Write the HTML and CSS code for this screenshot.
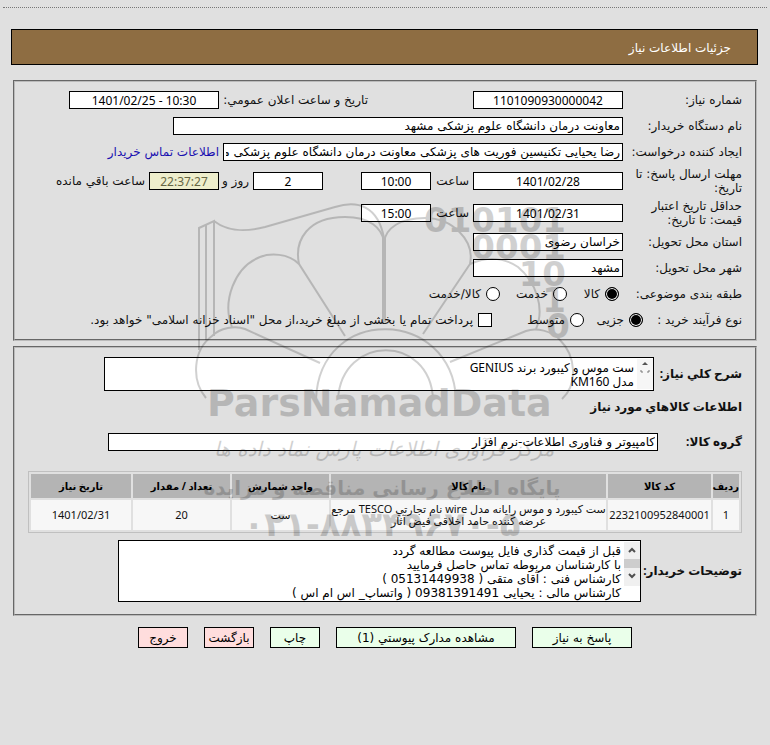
FILE: index.html
```html
<!DOCTYPE html>
<html lang="fa" dir="rtl">
<head>
    <meta charset="UTF-8">
    <meta name="viewport" content="width=device-width, initial-scale=1.0">
    <title>جزئیات اطلاعات نیاز</title>
    <link rel="stylesheet" href="styles.css">
</head>
<body>

    <header class="page-title">جزئیات اطلاعات نیاز</header>

    <main>
        <!-- Request details -->
        <section class="panel">
            <div class="row">
                <label class="caption" for="need-no">شماره نیاز:</label>
                <input type="text" id="need-no" class="w-date center" value="1101090930000042" readonly>
                <label class="announce" for="announce">تاریخ و ساعت اعلان عمومي:</label>
                <input type="text" id="announce" class="w-date center" dir="ltr" value="1401/02/25 - 10:30" readonly>
            </div>
            <div class="row">
                <label class="caption" for="org">نام دستگاه خریدار:</label>
                <input type="text" id="org" class="w-org" value="معاونت درمان دانشگاه علوم پزشکی مشهد" readonly>
            </div>
            <div class="row">
                <label class="caption" for="creator">ایجاد کننده درخواست:</label>
                <input type="text" id="creator" class="w-creator" value="رضا یحیایی تکنیسین فوریت های پزشکی معاونت درمان دانشگاه علوم پزشکی مشهد" readonly>
                <a href="#">اطلاعات تماس خریدار</a>
            </div>
            <div class="row tall">
                <label class="caption" for="reply-date">مهلت ارسال پاسخ: تا تاریخ:</label>
                <input type="text" id="reply-date" class="w-date center" value="1401/02/28" readonly>
                <label class="hour" for="reply-hour">ساعت</label>
                <input type="text" id="reply-hour" class="w-time center" value="10:00" readonly>
                <input type="text" id="days" class="w-time center days" value="2" readonly>
                <label class="and" for="days">روز و</label>
                <input type="text" id="left-time" class="w-time center countdown" value="22:37:27" readonly>
                <label for="left-time">ساعت باقي مانده</label>
            </div>
            <div class="row tall">
                <label class="caption" for="valid-date">حداقل تاریخ اعتبار قیمت: تا تاریخ:</label>
                <input type="text" id="valid-date" class="w-date center" value="1401/02/31" readonly>
                <label class="hour" for="valid-hour">ساعت</label>
                <input type="text" id="valid-hour" class="w-time center" value="15:00" readonly>
            </div>
            <div class="row">
                <label class="caption" for="province">استان محل تحویل:</label>
                <input type="text" id="province" class="w-date" value="خراسان رضوی" readonly>
            </div>
            <div class="row">
                <label class="caption" for="city">شهر محل تحویل:</label>
                <input type="text" id="city" class="w-date" value="مشهد" readonly>
            </div>
            <div class="row">
                <span class="caption subject">طبقه بندی موضوعی:</span>
                <label class="option goods"><input type="radio" name="subject" checked>کالا</label>
                <label class="option service"><input type="radio" name="subject">خدمت</label>
                <label class="option"><input type="radio" name="subject">کالا/خدمت</label>
            </div>
            <div class="row">
                <span class="caption process">نوع فرآیند خرید :</span>
                <label class="option small"><input type="radio" name="process" checked>جزیی</label>
                <label class="option medium"><input type="radio" name="process">متوسط</label>
                <label class="option"><input type="checkbox">پرداخت تمام یا بخشی از مبلغ خرید،از محل "اسناد خزانه اسلامی" خواهد بود.</label>
            </div>
        </section>

        <!-- Goods -->
        <section class="panel goods-panel">
            <div class="row area-row">
                <label class="bold" for="summary">شرح کلي نیاز:</label>
                <div class="area summary">
                    <textarea id="summary" readonly>ست موس و کیبورد برند GENIUS
مدل KM160</textarea>
                    <svg class="scroll" viewBox="0 0 16 30">
                        <rect width="16" height="30" fill="#f6f6f6"/>
                        <path d="M5 6l3-3 3 3z" fill="#555"/>
                        <path d="M4 11v2h2M12 11v2h-2" fill="none" stroke="#777"/>
                    </svg>
                </div>
            </div>
            <h2>اطلاعات کالاهاي مورد نیاز</h2>
            <div class="row group-row">
                <label class="bold group" for="group">گروه کالا:</label>
                <input type="text" id="group" class="w-group" value="کامپیوتر و فناوری اطلاعات-نرم افزار" readonly>
            </div>

            <table>
                <thead>
                    <tr>
                        <th class="c-no">ردیف</th>
                        <th class="c-code">کد کالا</th>
                        <th>نام کالا</th>
                        <th class="c-unit">واحد شمارش</th>
                        <th class="c-unit">تعداد / مقدار</th>
                        <th class="c-date">تاریخ نیاز</th>
                    </tr>
                </thead>
                <tbody>
                    <tr>
                        <td>1</td>
                        <td>2232100952840001</td>
                        <td>ست کیبورد و موس رایانه مدل wire نام تجارتي TESCO مرجع عرضه کننده حامد اخلاقی فیض آثار</td>
                        <td>ست</td>
                        <td>20</td>
                        <td>1401/02/31</td>
                    </tr>
                </tbody>
            </table>

            <div class="row notes-row">
                <label class="bold" for="notes">توضیحات خریدار:</label>
                <div class="area notes">
                    <textarea id="notes" readonly>قبل از قیمت گذاری فایل پیوست مطالعه گردد
با کارشناسان مربوطه تماس حاصل فرمایید
کارشناس فنی : آقای متقی ( 05131449938 )
کارشناس مالی : یحیایی 09381391491 ( واتساپ_ اس ام اس )</textarea>
                    <svg class="scroll" viewBox="0 0 16 44">
                        <rect width="16" height="44" fill="#f0f0f0"/>
                        <rect y="17" width="16" height="9" fill="#cdcdcd"/>
                        <path d="M5 10l3-3 3 3M5 32l3 3 3-3" fill="none" stroke="#505050" stroke-width="2"/>
                    </svg>
                </div>
            </div>
        </section>

        <!-- Actions -->
        <div class="actions">
            <button type="button" class="b-reply">پاسخ به نیاز</button>
            <button type="button" class="b-docs">مشاهده مدارک پیوستي (1)</button>
            <button type="button">چاپ</button>
            <button type="button" class="red">بازگشت</button>
            <button type="button" class="red">خروج</button>
        </div>
    </main>

    <!-- Watermark -->
    <svg class="watermark" viewBox="0 0 390 360" aria-hidden="true">
        <g fill="none" stroke="#000" stroke-width="2">
            <path d="M9 160V38L24 31V146M16 150V35M24 31C38 42 55 42 75 37L145 17C168 10 188 16 194 48"/>
            <path d="M194 48V132" stroke-width="4"/>
            <path d="M109 74C104 50 118 27 155 27C180 27 192 38 194 52M194 52C196 38 210 28 235 28C262 28 285 50 280 74"/>
            <path d="M155 146L109 74C98 63 80 63 70 67C44 77 32 112 42 137M280 74L233 144M280 74C298 66 315 68 328 77C346 92 355 118 346 139"/>
            <path d="M130 173L55 139C45 135 30 138 22 146C3 160 1 190 16 208M260 172L336 141C346 137 362 141 370 150C386 166 388 194 372 209"/>
            <path d="M126 209C130 114 262 118 266 209M148 209C152 144 240 144 243 209"/>
        </g>
        <g class="wm-latin" direction="ltr">
            <text text-anchor="end" x="376" y="42">010101</text>
            <text text-anchor="end" x="376" y="69">0001</text>
            <text text-anchor="end" x="376" y="96">10</text>
            <text text-anchor="end" x="376" y="122">1</text>
            <text text-anchor="end" x="380" y="148">0</text>
            <text class="wm-name" x="17" y="226">ParsNamadData</text>
        </g>
        <g class="wm-persian" text-anchor="middle">
            <text class="wm-script" x="194" y="266">مرکز فرآوری اطلاعات پارس نماد داده ها</text>
            <text class="wm-site" x="192" y="305">پایگاه اطلاع رسانی مناقصه و مزایده</text>
            <text class="wm-phone" x="192" y="346">۰۲۱-۸۸۳۴۹۶۷۰-۵</text>
        </g>
    </svg>

</body>
</html>
```
FILE: styles.css
```css
* {
    box-sizing: border-box;
}

body {
    position: relative;
    margin: 0;
    padding: 7px 3px 0;
    min-height: 100vh;
    background-color: #e0e0e0;
    color: #111;
    font-family: "DejaVu Sans", sans-serif;
    font-size: 12px;
    line-height: 14px;
}

.page-title {
    margin: 0 9px 15px 8px;
    padding: 11px 26px;
    height: 36px;
    border: 1px solid #000;
    background-color: #8e6d42;
    color: #fff;
}

/* dotted line across the top of the page */
body::before {
    content: "";
    display: block;
    margin-bottom: 21px;
    border-top: 1px dotted #777;
}

.panel {
    margin: 0 10px 5px;
    padding: 5px 13px 6px;
    border: 2px groove #bbb;
}

.row {
    display: flex;
    align-items: center;
    gap: 4px;
    min-height: 26px;
    white-space: nowrap;
}

.tall {
    min-height: 32px;
}

.caption {
    width: 115px;
    flex-shrink: 0;
}

.tall .caption {
    white-space: normal;
}

input, textarea, button {
    font: inherit;
    color: #000;
    border: 1px solid #000;
    border-radius: 0;
    outline: none;
}

input[type="text"] {
    height: 18px;
    padding: 0 2px;
    background-color: #fff;
}

input.center {
    font-family: "Noto Sans", "DejaVu Sans", sans-serif;
    text-align: center;
}

.w-date {
    width: 150px;
}

.w-time {
    width: 70px;
}

.w-org {
    width: 450px;
}

.w-creator {
    width: 400px;
}

.w-group {
    width: 550px;
}

.announce {
    width: 246px;
    padding-right: 101px;
}

.hour {
    width: 34px;
}

.and {
    width: 26px;
}

.days {
    margin-right: 34px;
}

input.countdown {
    background-color: #eeeecc;
    color: #666644;
}

a {
    color: #1a10b0;
    text-decoration: none;
}

/* Radios and tick box */
.option {
    display: flex;
    align-items: center;
    gap: 5px;
}

.option input {
    appearance: none;
    width: 14px;
    height: 14px;
    margin: 0;
    background-color: #fff;
}

.option input[type="radio"] {
    border-radius: 50%;
}

.option input[type="radio"]:checked {
    background-color: #000;
    box-shadow: inset 0 0 0 1px #fff;
}

.subject {
    width: 119px;
}

.goods {
    width: 48px;
}

.service {
    width: 63px;
}

.process {
    width: 95px;
}

.small {
    width: 55px;
}

.medium {
    width: 88px;
}

/* Goods panel */
.goods-panel {
    padding-top: 9px;
    padding-bottom: 12px;
}

.bold, h2 {
    font-family: "Noto Sans", "DejaVu Sans", sans-serif;
    font-size: 12px;
    font-weight: bold;
}

h2 {
    margin: 9px 0 19px;
    line-height: 14px;
}

.area-row .bold {
    width: 84px;
}

.area-row {
    min-height: 34px;
}

.group-row {
    min-height: 18px;
    margin-bottom: 20px;
}

.group {
    width: 80px;
}

.area {
    position: relative;
}

.summary {
    width: 550px;
    height: 34px;
    font-family: "Noto Sans", "DejaVu Sans", sans-serif;
}

.notes {
    width: 523px;
    height: 62px;
}

.area textarea {
    display: block;
    width: 100%;
    height: 100%;
    padding: 3px 19px 0 2px;
    background-color: #fff;
    overflow: hidden;
    resize: none;
}

.scroll {
    position: absolute;
    top: 2px;
    right: 1px;
    width: 16px;
}

.notes-row {
    margin-top: 7px;
}

.notes-row .bold {
    width: 97px;
}

table {
    width: 100%;
    border: 1px solid #c0c0c0;
    border-spacing: 2px;
    table-layout: fixed;
    font-family: "Noto Sans", "DejaVu Sans", sans-serif;
    font-size: 11px;
    line-height: 12px;
    text-align: center;
}

th {
    height: 24px;
    padding: 0;
    background-color: #b4b4b4;
    color: #000;
    font-size: 10px;
}

td {
    height: 30px;
    padding: 2px 0;
    background-color: #f7f7f7;
}

.c-no {
    width: 26px;
}

.c-code {
    width: 103px;
}

.c-unit {
    width: 97px;
}

.c-date {
    width: 100px;
}

/* Buttons */
.actions {
    display: flex;
    justify-content: center;
    gap: 16px;
    margin-top: 11px;
}

button {
    width: 50px;
    height: 21px;
    padding: 0;
    background-color: #eaffea;
    white-space: nowrap;
    cursor: pointer;
}

.b-reply {
    width: 100px;
}

.b-docs {
    width: 180px;
}

button.red {
    background-color: #ffdddd;
}

/* Watermark lies over the panels */
.watermark {
    position: absolute;
    top: 190px;
    left: calc(50% - 195px);
    width: 390px;
    height: 360px;
    opacity: 0.18;
    pointer-events: none;
}

.wm-latin {
    font-family: "DejaVu Sans", sans-serif;
    font-weight: bold;
    font-size: 34px;
}

.wm-name {
    font-size: 38px;
}

.wm-persian {
    font-family: "DejaVu Sans", sans-serif;
}

.wm-script {
    font-size: 20px;
    font-style: italic;
}

.wm-site {
    font-size: 20px;
    font-weight: bold;
}

.wm-phone {
    font-size: 34px;
    font-weight: bold;
    direction: ltr;
    unicode-bidi: bidi-override;
}
```
